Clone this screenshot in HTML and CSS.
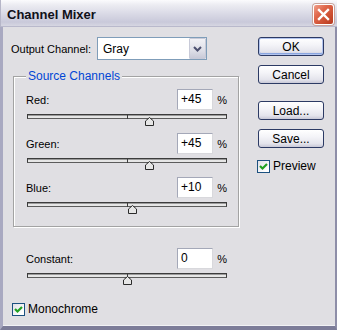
FILE: index.html
```html
<!DOCTYPE html>
<html>
<head>
<meta charset="utf-8">
<link rel="stylesheet" href="styles.css">
</head>
<body>
<div class="window">
  <div class="titlebar">
    <span class="title">Channel Mixer</span>
    <span class="close">
      <svg width="21" height="21" viewBox="0 0 21 21">
        <path d="M6 6 L15 15 M15 6 L6 15" stroke="#fff" stroke-width="2.4" stroke-linecap="square" fill="none"/>
      </svg>
    </span>
  </div>
  <div class="frame">
    <div class="main">
      <div class="out-row">
        <span class="out-lbl">Output Channel:</span>
        <div class="select">
          <span class="sel-text">Gray</span>
          <span class="sel-btn">
            <svg width="15" height="19" viewBox="0 0 15 19">
              <path d="M4 8 L7.5 11.5 L11 8" stroke="#4d5170" stroke-width="2" fill="none"/>
            </svg>
          </span>
        </div>
      </div>

      <fieldset class="group">
        <legend class="legend">Source Channels</legend>
        <div class="ch">
          <div class="ch-head"><span class="lbl">Red:</span><span class="num">+45</span><span class="pct">%</span></div>
          <div class="slider"><div class="track"><i class="mid"></i></div>
            <svg class="thumb" style="--v:45" width="9" height="9" viewBox="0 0 9 9"><path d="M0.5 8.5 L0.5 4 L4.5 0.5 L8.5 4 L8.5 8.5 Z" fill="#e6e6e6" stroke="#2b2b2b"/></svg>
          </div>
        </div>
        <div class="ch">
          <div class="ch-head"><span class="lbl">Green:</span><span class="num">+45</span><span class="pct">%</span></div>
          <div class="slider"><div class="track"><i class="mid"></i></div>
            <svg class="thumb" style="--v:45" width="9" height="9" viewBox="0 0 9 9"><path d="M0.5 8.5 L0.5 4 L4.5 0.5 L8.5 4 L8.5 8.5 Z" fill="#e6e6e6" stroke="#2b2b2b"/></svg>
          </div>
        </div>
        <div class="ch">
          <div class="ch-head"><span class="lbl">Blue:</span><span class="num">+10</span><span class="pct">%</span></div>
          <div class="slider"><div class="track"><i class="mid"></i></div>
            <svg class="thumb" style="--v:10" width="9" height="9" viewBox="0 0 9 9"><path d="M0.5 8.5 L0.5 4 L4.5 0.5 L8.5 4 L8.5 8.5 Z" fill="#e6e6e6" stroke="#2b2b2b"/></svg>
          </div>
        </div>
      </fieldset>

      <div class="ch constant">
        <div class="ch-head"><span class="lbl">Constant:</span><span class="num">0</span><span class="pct">%</span></div>
        <div class="slider"><div class="track"><i class="mid"></i></div>
          <svg class="thumb" style="--v:0" width="9" height="9" viewBox="0 0 9 9"><path d="M0.5 8.5 L0.5 4 L4.5 0.5 L8.5 4 L8.5 8.5 Z" fill="#e6e6e6" stroke="#2b2b2b"/></svg>
        </div>
      </div>

      <div class="check mono">
        <span class="box"><svg width="11" height="11" viewBox="0 0 11 11"><path d="M2 5 L4.5 7.5 L9 3" stroke="#21a121" stroke-width="2.2" fill="none"/></svg></span>
        <span class="check-lbl">Monochrome</span>
      </div>
    </div>

    <div class="side">
      <div class="btn default">OK</div>
      <div class="btn">Cancel</div>
      <div class="btn load">Load...</div>
      <div class="btn">Save...</div>
      <div class="check preview">
        <span class="box"><svg width="11" height="11" viewBox="0 0 11 11"><path d="M2 5 L4.5 7.5 L9 3" stroke="#21a121" stroke-width="2.2" fill="none"/></svg></span>
        <span class="check-lbl">Preview</span>
      </div>
    </div>
  </div>
</div>
</body>
</html>
```
FILE: styles.css
```css
html, body {
  margin: 0;
  padding: 0;
  background: #e0dfe3;
}

.window {
  width: 337px;
  height: 330px;
  display: flex;
  flex-direction: column;
  font-family: "Liberation Sans", Arial, sans-serif;
  font-size: 11px;
  color: #000;
  overflow: hidden;
}

.titlebar {
  height: 27px;
  flex: none;
  box-sizing: border-box;
  display: flex;
  align-items: center;
  justify-content: space-between;
  padding: 1px 3px 0 6px;
  background: linear-gradient(to bottom, #fbfbfd 0%, #ececf2 18%, #dadae6 50%, #c9c9da 82%, #d6d6e2 96%, #a0a0b8 100%);
  border-left: 1px solid #b6b6c8;
}

.title {
  font-weight: bold;
  font-size: 13px;
  color: #101018;
}

.close {
  width: 21px;
  height: 21px;
  box-sizing: border-box;
  border: 1px solid #fff;
  border-radius: 3px;
  background: linear-gradient(135deg, #f0a08c 0%, #e0684c 35%, #c84a2c 75%, #b53a20 100%);
  box-shadow: 0 0 0 1px #c9a49c;
  display: flex;
  align-items: center;
  justify-content: center;
}

.close svg {
  display: block;
  margin: -1px;
}

.frame {
  flex: 1;
  display: flex;
  border-left: 3px solid #a9a9c1;
  border-right: 2px solid #8e8ea8;
  border-bottom: 4px solid #7c7c98;
  box-shadow: inset 0 -1px 0 #f2f2f5;
  padding: 10px 0 0 8px;
}

.main {
  width: 228px;
  flex: none;
  display: flex;
  flex-direction: column;
}

.out-row {
  display: flex;
  align-items: center;
  height: 23px;
}

.out-lbl {
  width: 86px;
  flex: none;
}

.select {
  width: 110px;
  height: 23px;
  box-sizing: border-box;
  border: 1px solid #7f9db9;
  background: #fff;
  display: flex;
  align-items: center;
  justify-content: space-between;
}

.sel-text {
  padding-left: 5px;
  font-size: 12px;
}

.sel-btn {
  width: 17px;
  height: 21px;
  box-sizing: border-box;
  border: 1px solid #c8cad8;
  border-radius: 1px;
  background: linear-gradient(to bottom, #f2f2f6 0%, #dedfe8 60%, #c9cad8 100%);
  display: flex;
  align-items: center;
  justify-content: center;
}

.group {
  margin: 10px 0 0 2px;
  width: 226px;
  box-sizing: border-box;
  border: 1px solid #a3a3a3;
  box-shadow: inset 1px 1px 0 #fff, 1px 1px 0 #fff;
  padding: 6px 11px 12px 12px;
}

.legend {
  color: #0046d5;
  padding: 0 2px;
  margin-left: 0;
  line-height: 13px;
  font-size: 12px;
  background: #e0dfe3;
}

.ch {
  display: flex;
  flex-direction: column;
}

.ch + .ch {
  margin-top: 7px;
}

.ch-head {
  display: flex;
  align-items: center;
  height: 21px;
}

.lbl {
  flex: 1;
}

.num {
  width: 36px;
  height: 21px;
  box-sizing: border-box;
  border: 1px solid #a4a8b8;
  border-right-color: #d8d8dc;
  border-bottom-color: #d8d8dc;
  background: #fff;
  padding-left: 3px;
  line-height: 19px;
  font-size: 12px;
}

.pct {
  width: 14px;
  text-align: right;
}

.slider {
  position: relative;
  margin: 4px 0 0 1px;
  width: 200px;
  height: 12px;
}

.track {
  position: relative;
  height: 5px;
  box-sizing: border-box;
  border: 1px solid #3c3c3c;
  border-bottom-color: #5c5c5c;
  background: #e6e6e6;
  box-shadow: inset 0 1px 0 #9a9a9a;
}

.mid {
  position: absolute;
  left: 99px;
  top: -1px;
  width: 1px;
  height: 5px;
  background: #3c3c3c;
}

.thumb {
  position: absolute;
  top: 3px;
  left: calc(50% + var(--v) * 0.5px - 4.5px);
  display: block;
}

.constant {
  margin: 21px 0 0 15px;
  width: 201px;
}

.check {
  display: flex;
  align-items: center;
}

.box {
  width: 13px;
  height: 13px;
  box-sizing: border-box;
  border: 1px solid #1c5180;
  background: linear-gradient(135deg, #e0e0e6 0%, #fff 80%);
  display: flex;
  align-items: center;
  justify-content: center;
}

.box svg {
  display: block;
}

.check-lbl {
  margin-left: 3px;
  font-size: 12px;
}

.mono {
  margin: 17px 0 0 1px;
}

.side {
  margin-left: 19px;
  display: flex;
  flex-direction: column;
  width: 66px;
}

.btn {
  height: 19px;
  box-sizing: border-box;
  border: 1px solid #2c3a64;
  border-radius: 3px;
  background: linear-gradient(to bottom, #ffffff 0%, #f4f4f8 40%, #e4e4ec 80%, #c8c8d6 100%);
  display: flex;
  align-items: center;
  justify-content: center;
  font-size: 12px;
}

.btn + .btn {
  margin-top: 9px;
}

.btn.default {
  box-shadow: inset 0 0 0 1px #b2c4ee, inset 0 -1px 0 1px #8aa6e0;
}

.btn.load {
  margin-top: 17px;
}

.preview {
  margin: 11px 0 0 -1px;
}
```
